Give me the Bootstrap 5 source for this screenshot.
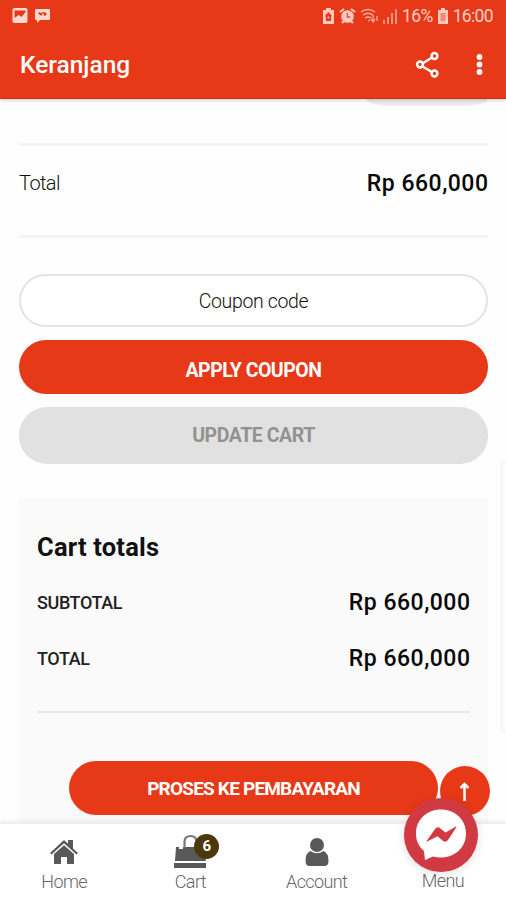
<!DOCTYPE html>
<html lang="id">
<head>
<meta charset="utf-8">
<meta name="viewport" content="width=device-width, initial-scale=1">
<title>Keranjang</title>
<link href="https://cdn.jsdelivr.net/npm/bootstrap@5.3.0/dist/css/bootstrap.min.css" rel="stylesheet">
<style>
:root { --brand: #e73817; }
body { font-family: Roboto, "Liberation Sans", sans-serif; color: #111; background: #fefefe; }
.screen { height: 900px; }
.app-head { height: 99px; background: var(--brand); color: #fff; box-shadow: 0 1px 4px rgba(0,0,0,.22); z-index: 2; border-bottom: 1px solid #d92a12; }
.status { height: 32px; padding: 0 13px 0 12px; color: #ffd0c4; font-size: 17.5px; line-height: 32px; letter-spacing: -.65px; }
.title-row { height: 66px; padding: 0 16px 0 20px; }
.title-txt { font-size: 24.5px; font-weight: 500; line-height: 66px; }
.content { padding: 0 18px 0 19px; }
.ghost { width: 122px; height: 7px; background: #ececec; border-radius: 0 0 28px 28px / 0 0 7px 7px; }
.total-row { height: 95px; margin-top: 37px; border-top: 3px solid #f4f4f4; border-bottom: 3px solid #f4f4f4; padding-bottom: 13px; }
.total-lbl { font-size: 20px; font-weight: 300; color: #111; letter-spacing: -.6px; margin-top: -2px; }
.price { font-size: 23px; font-weight: 500; letter-spacing: .5px; margin-right: -.5px; line-height: 30px; color: #080808; }
.pill { height: 54px; border-radius: 28px; font-size: 19.5px; font-weight: 700; line-height: 1; border: 0; }
.pill-main, .pill-main:hover { background: var(--brand); color: #fff; }
.coupon { height: 53px; margin-top: 36px; border: 2px solid #e3e3e3; border-radius: 27px; font-size: 19.5px; font-weight: 300; color: #111; background: #fff; text-align: center; letter-spacing: -.35px; box-shadow: none; padding-top: 8px; }
.coupon::placeholder { color: #111; opacity: 1; }
.apply { margin-top: 13px; padding-top: 13px; letter-spacing: -.5px; }
.update, .update:disabled { height: 57px; margin-top: 13px; background: #e1e1e1; color: #929292; opacity: 1; letter-spacing: -.45px; padding-top: 6px; }
.totals { height: 326px; margin-top: 34px; background: #fafafa; padding: 32px 18px 0 18px; }
.totals-title { font-size: 25.5px; font-weight: 700; line-height: 34px; letter-spacing: .2px; margin-bottom: 11px; }
.sum { height: 56px; }
.sum-lbl { font-size: 18px; font-weight: 500; color: #222; letter-spacing: -.4px; padding-bottom: 2px; }
.sum-line { height: 2px; background: #e9e9e9; margin-top: 24px; }
.checkout { width: 369px; height: 54px; margin: 48px 0 0 32px; letter-spacing: -.8px; font-size: 19px; padding-top: 7px; }
.side-tab { left: 501px; top: 462px; width: 10px; height: 270px; border: 1px solid #f1f1f1; background: #fcfcfc; border-radius: 2px; }
.tabs { height: 77px; background: #fff; box-shadow: 0 -1px 4px rgba(0,0,0,.1); border-top: 1px solid #eef0f2; z-index: 2; padding: 9px 0 0 1px; }
.tab-item { width: 127px; color: #666; font-size: 18px; font-weight: 300; line-height: 26px; letter-spacing: -.6px; text-decoration: none; }
.tab-item svg { height: 36px; width: 44px; fill: #595959; }
.menu-item { padding-bottom: 6px; }
.count { left: 67px; top: 1px; width: 25px; height: 25px; line-height: 25px; background: #4a390b; color: #fff; font-size: 15px; font-weight: 700; text-align: center; letter-spacing: 0; }
.to-top { left: 440px; top: 766px; width: 50px; height: 50px; background: var(--brand); z-index: 3; }
.chat { left: 404px; top: 798px; width: 74px; height: 74px; background: #d13a42; z-index: 4; box-shadow: 0 2px 10px rgba(0,0,0,.13); }
</style>
<script src="https://cdn.jsdelivr.net/npm/bootstrap@5.3.0/dist/js/bootstrap.bundle.min.js"></script>
</head>
<body>
<div class="screen position-relative d-flex flex-column overflow-hidden">
  <header class="app-head flex-shrink-0 position-relative">
    <div class="status d-flex align-items-center justify-content-between">
      <svg width="40" height="16" viewBox="0 0 40 16" fill="#ffd9d0">
        <path fill-rule="evenodd" d="M2.500 0h11q2 0 2 2v11q0 2-2 2h-11q-2 0-2-2V2q0-2 2-2zM2.500 2.500V10l4-3 3 2 4-5V2.500z"/>
        <path fill-rule="evenodd" d="M24 1h13q1 0 1 1v9q0 1-1 1h-9l-3 3v-3h-1q-1 0-1-1V2q0-1 1-1zM26.500 4v2l3 2 1-3 2 3 2-1V5l-3-1-2 1z"/>
      </svg>
      <div class="d-flex align-items-center">
        <svg width="75" height="17" viewBox="0 0 75 17" fill="#ffc9bd">
          <path fill-rule="evenodd" d="M3 2V0h5v2h3v14H0V2zM2 8l1 1v4h5V9l1-1-3.500-4zM4.700 8.500h1.600v2H4.700z"/>
          <circle cx="24.500" cy="8.500" r="6.300"/><path d="M17 4l4-3M28 1l4 3M19 15l2-2M30 15l-2-2" stroke="#ffc9bd" stroke-width="2"/><path d="M24.300 5v4h3" fill="none" stroke="#d95137" stroke-width="1.300"/>
          <path d="M38 4q7-5 14 0M40 7q5-3.500 10 0M42 10q3-2 6 0M45 13l2-1M50 7v6m-2-2 2 3 2-3M54 13V8" fill="none" stroke="#ffb09f" stroke-width="1.300"/>
          <path d="M61 12v4M65 9v7M69 5v11M73 1v15" stroke="#ffb09f" stroke-width="1.500"/>
        </svg>
        <span class="ms-1">16%</span>
        <svg class="mx-1" width="12" height="17" viewBox="0 0 12 17"><path d="M4 0h4v2h3v14H1V2h3z" fill="#ffc9bd"/><path d="M3.500 5h5v8h-5z" fill="#ee8a76"/></svg>
        <span>16:00</span>
      </div>
    </div>
    <div class="title-row d-flex align-items-center justify-content-between">
      <span class="title-txt">Keranjang</span>
      <svg width="76" height="28" viewBox="0 0 76 28">
        <path d="M20.500 5L6 14l14.500 8.500" fill="none" stroke="#fff" stroke-width="2.400"/>
        <g fill="#e73817" stroke="#fff" stroke-width="2.500"><circle cx="20.500" cy="5" r="2.900"/><circle cx="6" cy="13.500" r="2.900"/><circle cx="20.500" cy="22.500" r="2.900"/></g>
        <g fill="#fff"><circle cx="65.500" cy="6" r="2.900"/><circle cx="65.500" cy="13.500" r="2.900"/><circle cx="65.500" cy="21" r="2.900"/></g>
      </svg>
    </div>
  </header>

  <main class="content flex-grow-1 overflow-hidden">
    <div class="ghost ms-auto"></div>
    <div class="total-row d-flex align-items-center justify-content-between">
      <span class="total-lbl">Total</span>
      <span class="price">Rp 660,000</span>
    </div>
    <input class="coupon form-control" type="text" placeholder="Coupon code">
    <button class="btn pill pill-main apply w-100" type="button">APPLY COUPON</button>
    <button class="btn pill update w-100" type="button" disabled>UPDATE CART</button>
    <section class="totals">
      <h2 class="totals-title">Cart totals</h2>
      <div class="sum d-flex align-items-center justify-content-between"><span class="sum-lbl">SUBTOTAL</span><span class="price">Rp 660,000</span></div>
      <div class="sum d-flex align-items-center justify-content-between"><span class="sum-lbl">TOTAL</span><span class="price">Rp 660,000</span></div>
      <div class="sum-line"></div>
      <button class="btn pill pill-main checkout" type="button">PROSES KE PEMBAYARAN</button>
    </section>
  </main>

  <nav class="tabs d-flex flex-shrink-0 position-relative">
    <a class="tab-item d-flex flex-column align-items-center" href="#">
      <svg viewBox="0 0 44 36"><path d="M8 20L22 7l4 3.800V7h5v8.500l5 4.500-1.500 1.500L22 10.300 9.500 21.500zM12 21l10-8.700L32 21v10h-7v-7h-6v7h-7z"/></svg>
      <span>Home</span>
    </a>
    <a class="tab-item position-relative d-flex flex-column align-items-center" href="#">
      <svg viewBox="0 0 44 36"><path d="M8 14h3v2h4v-2h13v2h4v-2h3l3 14H7zM6 30h32v5H6z"/><path d="M16.500 15V9q0-6 6-6t6 6v6" fill="none" stroke="#777" stroke-width="2.200"/></svg>
      <span>Cart</span>
      <span class="count position-absolute rounded-circle">6</span>
    </a>
    <a class="tab-item d-flex flex-column align-items-center" href="#">
      <svg viewBox="0 0 44 36"><circle cx="22" cy="12" r="7"/><path d="M15.500 18q6.500 4.500 13 0 5 2 5 10 0 5-4 5h-15q-4 0-4-5 0-8 5-10z"/></svg>
      <span>Account</span>
    </a>
    <a class="tab-item menu-item d-flex flex-column align-items-center justify-content-end" href="#"><span>Menu</span></a>
  </nav>

  <div class="side-tab position-absolute"></div>
  <div class="to-top position-absolute rounded-circle">
    <svg width="50" height="50" viewBox="0 0 50 50"><path d="M24.500 35V20M20.500 22l4-4 4 4" fill="none" stroke="#fff" stroke-width="2.500"/></svg>
  </div>
  <div class="chat position-absolute rounded-circle">
    <svg width="74" height="74" viewBox="0 0 74 74">
      <path fill="#fff" d="M37 11.500c-14 0-25 10-25 24 0 8 3 13 8 17.500l1 9 8-3.500c3 .9 5 1 8 1 14 0 25-10 25-24s-11-24-25-24z"/>
      <path fill="#d13a42" d="M22 44l9-13q2.500-3 5.500-.500l5 4L52 28.500q1-.2.200 1L44 42q-2.500 3-5.500.600l-5-4.300z"/>
    </svg>
  </div>
</div>
</body>
</html>
